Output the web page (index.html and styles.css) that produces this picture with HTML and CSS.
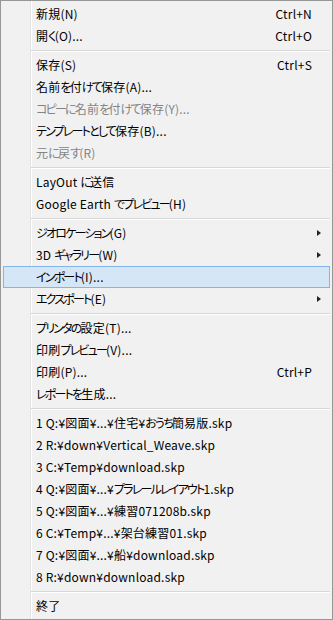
FILE: index.html
```html
<!DOCTYPE html>
<html lang="ja">
<head>
  <meta charset="UTF-8" />
  <meta name="viewport" content="width=device-width, initial-scale=1.0"/>
  <title>ファイル メニュー</title>
  <link rel="stylesheet" href="styles.css">
</head>
<body>

  <!-- File menu -->
  <ul class="menu">
    <li class="item"><span class="label">新規(N)</span><span class="key">Ctrl+N</span></li>
    <li class="item"><span class="label">開<span class="kana">く</span>(O)...</span><span class="key">Ctrl+O</span></li>
    <li class="sep"></li>
    <li class="item"><span class="label">保存(S)</span><span class="key">Ctrl+S</span></li>
    <li class="item"><span class="label">名前<span class="kana">を</span>付<span class="kana">けて</span>保存(A)...</span></li>
    <li class="item disabled"><span class="label"><span class="kana">コピーに</span>名前<span class="kana">を</span>付<span class="kana">けて</span>保存(Y)...</span></li>
    <li class="item"><span class="label"><span class="kana">テンプレートとして</span>保存(B)...</span></li>
    <li class="item disabled"><span class="label">元<span class="kana">に</span>戻<span class="kana">す</span>(R)</span></li>
    <li class="sep"></li>
    <li class="item"><span class="label">LayOut <span class="kana">に</span>送信</span></li>
    <li class="item"><span class="label">Google Earth <span class="kana">でプレビュー</span>(H)</span></li>
    <li class="sep"></li>
    <li class="item sub"><span class="label"><span class="kana">ジオロケーション</span>(G)</span><span class="arrow"></span></li>
    <li class="item sub"><span class="label">3D <span class="kana">ギャラリー</span>(W)</span><span class="arrow"></span></li>
    <li class="item active"><span class="label"><span class="kana">インポート</span>(I)...</span></li>
    <li class="item sub"><span class="label"><span class="kana">エクスポート</span>(E)</span><span class="arrow"></span></li>
    <li class="sep"></li>
    <li class="item"><span class="label"><span class="kana">プリンタの</span>設定(T)...</span></li>
    <li class="item"><span class="label">印刷<span class="kana">プレビュー</span>(V)...</span></li>
    <li class="item"><span class="label">印刷(P)...</span><span class="key">Ctrl+P</span></li>
    <li class="item"><span class="label"><span class="kana">レポートを</span>生成...</span></li>
    <li class="sep"></li>
    <li class="item"><span class="label">1 Q:¥図面¥...¥住宅¥<span class="kana">おうち</span>簡易版.skp</span></li>
    <li class="item"><span class="label">2 R:¥down¥Vertical_Weave.skp</span></li>
    <li class="item"><span class="label">3 C:¥Temp¥download.skp</span></li>
    <li class="item"><span class="label">4 Q:¥図面¥...¥<span class="kana">プラレールレイアウト</span>1.skp</span></li>
    <li class="item"><span class="label">5 Q:¥図面¥...¥練習071208b.skp</span></li>
    <li class="item"><span class="label">6 C:¥Temp¥...¥架台練習01.skp</span></li>
    <li class="item"><span class="label">7 Q:¥図面¥...¥船¥download.skp</span></li>
    <li class="item"><span class="label">8 R:¥down¥download.skp</span></li>
    <li class="sep"></li>
    <li class="item"><span class="label">終了</span></li>
  </ul>

</body>
</html>
```

FILE: styles.css
```css
* {
  box-sizing: border-box;
}

body {
  margin: 0;
  background-color: #fff;
  font-family: "Noto Sans CJK JP", "Noto Sans", sans-serif;
  font-size: 12px;
  color: #000;
}

.menu {
  list-style: none;
  margin: 0;
  padding: 2px;
  width: 333px;
  height: 620px;
  border: 1px solid #979797;
  background-color: #f1f1f1;
  /* icon gutter line */
  background-image: linear-gradient(to right,
    transparent 29px, #e2e3e3 29px, #e2e3e3 30px,
    #fff 30px, #fff 31px, transparent 31px);
}

.item {
  display: flex;
  align-items: center;
  height: 22px;
  padding: 0 17px 0 32px;
  border: 1px solid transparent;
  line-height: 20px;
  white-space: nowrap;
  font-feature-settings: "palt";
  letter-spacing: 0.2px;
}

.item .label {
  flex: 1;
}

/* Meiryo UI draws kana narrow */
.kana {
  letter-spacing: -1.8px;
}

.item .key {
  text-align: right;
}

.item.disabled {
  color: #848484;
}

.item.active {
  background-color: #d5e6f7;
  border-color: #84b5e8;
}

.arrow {
  width: 0;
  height: 0;
  margin-right: -9px;
  border-top: 3.5px solid transparent;
  border-bottom: 3.5px solid transparent;
  border-left: 4px solid #222;
}

.sep {
  height: 7px;
  margin-left: 28px;
  padding-top: 3px;
}

.sep::before {
  content: "";
  display: block;
  height: 1px;
  background-color: #d7d7d7;
  border-bottom: 1px solid #fff;
  box-sizing: content-box;
}
```
